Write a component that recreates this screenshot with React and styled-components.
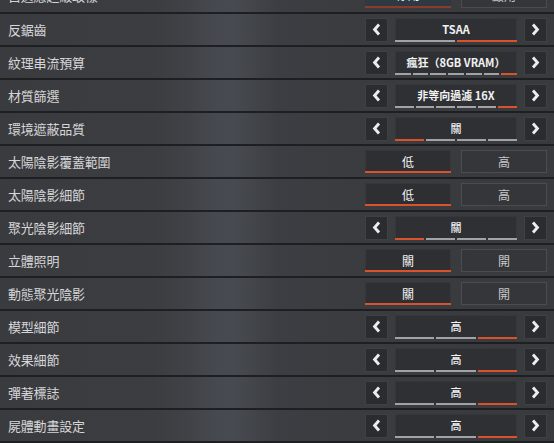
import React from 'react';
import styled, { createGlobalStyle } from 'styled-components';

const Global = createGlobalStyle`
  html, body { margin: 0; padding: 0; }
  body {
    width: 554px;
    height: 443px;
    overflow: hidden;
    background: #1e1f22;
    font-family: "Noto Sans CJK TC", "Noto Sans", sans-serif;
  }
`;

const ORANGE = '#d9522c';
const GRAY = '#a2a3a5';

const Page = styled.div`
  width: 554px;
  height: 443px;
  overflow: hidden;
  background: linear-gradient(
    90deg,
    #3a3b3f 0%,
    #3c3d41 28%,
    #404247 34%,
    #46494f 39%,
    #474a50 42%,
    #43464b 45%,
    #3d3e43 50%,
    #3b3c40 60%,
    #393a3e 100%
  );
`;

const List = styled.div`
  display: flex;
  flex-direction: column;
  margin-top: -19px;
`;

const Row = styled.div`
  height: 31px;
  border-bottom: 2px solid #1e1f22;
  display: flex;
  align-items: center;
  justify-content: space-between;
  padding: 0 7px 0 8px;
`;

const Label = styled.div`
  font-size: 13px;
  color: #d6d6d8;
  letter-spacing: -0.2px;
  white-space: nowrap;
  margin-top: ${p => (p.top ? '-3px' : '0')};
`;

const Control = styled.div`
  width: 182px;
  display: flex;
  align-items: center;
  gap: ${p => (p.toggle ? '10px' : '7px')};
`;

const ArrowBtn = styled.div`
  width: 21px;
  height: 22px;
  flex: none;
  background: #2b2c2f;
  border: 1px solid #3f4044;
  display: flex;
  align-items: center;
  justify-content: center;
`;

const Box = styled.div`
  flex: 1;
  height: 24px;
  display: flex;
  flex-direction: column;
  background: #2f3034;
  box-shadow: inset 0 0 0 1px #36373b;
`;

const BoxText = styled.div`
  flex: 1;
  display: flex;
  align-items: center;
  justify-content: center;
  font-size: 11px;
  font-weight: ${p => (p.light ? 500 : 700)};
  color: #f2f2f2;
  white-space: nowrap;
  padding-top: 1px;
`;

const Bar = styled.div`
  height: 2px;
  display: flex;
  gap: 2px;
`;

const Seg = styled.div`
  flex: 1;
  background: ${p => (p.on ? ORANGE : GRAY)};
`;

const ToggleBtn = styled.div`
  flex: 1;
  height: 23px;
  display: flex;
  flex-direction: column;
  box-sizing: border-box;
  background: ${p => (p.hover ? '#2e3944' : p.selected ? '#2e2f32' : '#35363a')};
  border: 1px solid ${p => (p.selected ? '#36373b' : '#4b4c50')};
  border-bottom: ${p => (p.selected ? 'none' : '1px solid #4b4c50')};
`;

const ToggleText = styled.div`
  flex: 1;
  display: flex;
  align-items: center;
  justify-content: center;
  font-size: 12px;
  color: ${p => (p.selected ? '#f4f4f4' : '#c9c9cb')};
  margin-top: ${p => (p.top ? '-3px' : '0')};
`;

const ToggleLine = styled.div`
  height: 2px;
  margin: 0 -1px;
  background: ${p => (p.dim ? '#8a3b2a' : ORANGE)};
`;

const Chevron = ({ dir }) => (
  <svg width="9" height="13" viewBox="0 0 9 13">
    <polyline
      points={dir === 'left' ? '7,1.5 2.6,6.5 7,11.5' : '2,1.5 6.4,6.5 2,11.5'}
      fill="none"
      stroke="#ededed"
      strokeWidth="2.9"
      strokeLinejoin="miter"
    />
  </svg>
);

const rows = [
  { label: '自適應超級取樣', type: 'toggle', options: ['停用', '啟用'], sel: 0, hover: true, top: true },
  { label: '反鋸齒', type: 'arrow', value: 'TSAA', count: 2, on: 1 },
  { label: '紋理串流預算', type: 'arrow', value: '瘋狂（8GB VRAM）', count: 7, on: 6 },
  { label: '材質篩選', type: 'arrow', value: '非等向過濾 16X', count: 6, on: 5 },
  { label: '環境遮蔽品質', type: 'arrow', value: '關', count: 4, on: 0, light: true },
  { label: '太陽陰影覆蓋範圍', type: 'toggle', options: ['低', '高'], sel: 0 },
  { label: '太陽陰影細節', type: 'toggle', options: ['低', '高'], sel: 0 },
  { label: '聚光陰影細節', type: 'arrow', value: '關', count: 4, on: 0, light: true },
  { label: '立體照明', type: 'toggle', options: ['關', '開'], sel: 0 },
  { label: '動態聚光陰影', type: 'toggle', options: ['關', '開'], sel: 0 },
  { label: '模型細節', type: 'arrow', value: '高', count: 3, on: 2, light: true },
  { label: '效果細節', type: 'arrow', value: '高', count: 3, on: 2, light: true },
  { label: '彈著標誌', type: 'arrow', value: '高', count: 3, on: 2, light: true },
  { label: '屍體動畫設定', type: 'arrow', value: '高', count: 3, on: 2, light: true },
];

const ArrowControl = ({ value, count, on, light }) => (
  <Control>
    <ArrowBtn>
      <Chevron dir="left" />
    </ArrowBtn>
    <Box>
      <BoxText light={light}>{value}</BoxText>
      <Bar>
        {Array.from({ length: count }).map((_, i) => (
          <Seg key={i} on={i === on} />
        ))}
      </Bar>
    </Box>
    <ArrowBtn>
      <Chevron dir="right" />
    </ArrowBtn>
  </Control>
);

const ToggleControl = ({ options, sel, hover, top }) => (
  <Control toggle>
    {options.map((o, i) => (
      <ToggleBtn key={o} selected={i === sel} hover={hover && i === sel}>
        <ToggleText selected={i === sel} top={top}>{o}</ToggleText>
        {i === sel && <ToggleLine dim={hover} />}
      </ToggleBtn>
    ))}
  </Control>
);

export default function App() {
  return (
    <>
      <Global />
      <Page>
        <List>
          {rows.map(r => (
            <Row key={r.label}>
              <Label top={r.top}>{r.label}</Label>
              {r.type === 'arrow' ? (
                <ArrowControl value={r.value} count={r.count} on={r.on} light={r.light} />
              ) : (
                <ToggleControl options={r.options} sel={r.sel} hover={r.hover} top={r.top} />
              )}
            </Row>
          ))}
        </List>
      </Page>
    </>
  );
}
